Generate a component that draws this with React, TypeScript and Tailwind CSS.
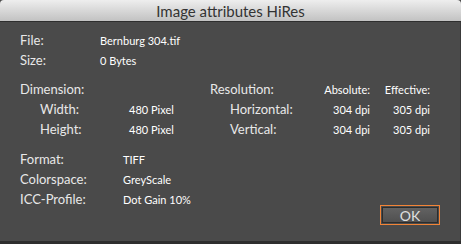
const font = { fontFamily: "Lato, 'Liberation Sans', sans-serif" };

function Label({ children, className = "" }: { children: React.ReactNode; className?: string }) {
  return <span className={`text-[13px] text-[#e8e8e8] ${className}`}>{children}</span>;
}

function Value({ children, className = "" }: { children: React.ReactNode; className?: string }) {
  return <span className={`text-[11px] text-white ${className}`}>{children}</span>;
}

export default function App() {
  return (
    <div style={font} className="w-[461px] h-[244px] flex flex-col bg-[#4a4a4a] overflow-hidden">
      {/* Title bar */}
      <div className="h-[22px] shrink-0 flex items-center justify-center rounded-t-[4px] bg-linear-to-b from-[#eeeeee] to-[#c2c2c2] border-b border-[#2e2e2e]">
        <span className="text-[15px] text-[#333333] pt-[1px]">Image attributes HiRes</span>
      </div>

      {/* Body */}
      <div className="flex-1 flex flex-col pt-[9px] border-r border-[#3a3a3a]">
        {/* File info */}
        <div className="flex flex-col pl-[20px]">
          <div className="h-[20px] flex items-center">
            <Label className="w-[80px]">File:</Label>
            <Value>Bernburg 304.tif</Value>
          </div>
          <div className="h-[20px] flex items-center">
            <Label className="w-[80px]">Size:</Label>
            <Value>0 Bytes</Value>
          </div>
        </div>

        {/* Dimension / Resolution */}
        <div className="flex mt-[9px] pl-[20px]">
          <div className="w-[190px] flex flex-col">
            <div className="h-[20px] flex items-center">
              <Label>Dimension:</Label>
            </div>
            <div className="h-[20px] flex items-center pl-[20px]">
              <Label className="w-[89px]">Width:</Label>
              <Value>480 Pixel</Value>
            </div>
            <div className="h-[20px] flex items-center pl-[20px]">
              <Label className="w-[89px]">Height:</Label>
              <Value>480 Pixel</Value>
            </div>
          </div>
          <div className="flex flex-col">
            <div className="h-[20px] flex items-center">
              <Label className="w-[100px]">Resolution:</Label>
              <Value className="w-[60px] text-right">Absolute:</Value>
              <Value className="w-[60px] text-right">Effective:</Value>
            </div>
            <div className="h-[20px] flex items-center pl-[20px]">
              <Label className="w-[80px]">Horizontal:</Label>
              <Value className="w-[60px] text-right">304 dpi</Value>
              <Value className="w-[60px] text-right">305 dpi</Value>
            </div>
            <div className="h-[20px] flex items-center pl-[20px]">
              <Label className="w-[80px]">Vertical:</Label>
              <Value className="w-[60px] text-right">304 dpi</Value>
              <Value className="w-[60px] text-right">305 dpi</Value>
            </div>
          </div>
        </div>

        {/* Format / button */}
        <div className="flex mt-[10px] pl-[20px]">
          <div className="flex-1 flex flex-col">
            <div className="h-[20px] flex items-center">
              <Label className="w-[103px]">Format:</Label>
              <Value>TIFF</Value>
            </div>
            <div className="h-[20px] flex items-center">
              <Label className="w-[103px]">Colorspace:</Label>
              <Value>GreyScale</Value>
            </div>
            <div className="h-[20px] flex items-center">
              <Label className="w-[103px]">ICC-Profile:</Label>
              <Value>Dot Gain 10%</Value>
            </div>
          </div>
          <div className="mt-[55px] mr-[20px] w-[60px] h-[20px] border border-[#f28437] p-px">
            <button className="w-full h-full flex items-center justify-center border border-[#2c2c2c] bg-linear-to-b from-[#626262] to-[#505050] text-[14px] text-[#e0e0e0]">
              OK
            </button>
          </div>
        </div>
      </div>

      {/* Bottom edge */}
      <div className="h-[3px] shrink-0 bg-[#2e2e2e]" />
    </div>
  );
}
